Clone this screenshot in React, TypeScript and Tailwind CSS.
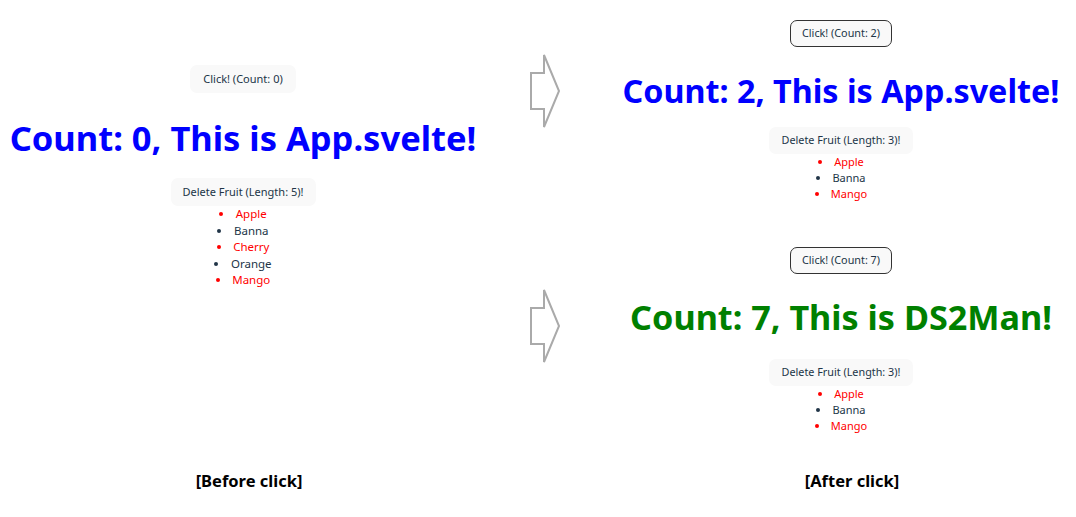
const fruitsAll = ['Apple', 'Banna', 'Cherry', 'Orange', 'Mango']
const fruitsLeft = ['Apple', 'Banna', 'Mango']

function Arrow() {
  return (
    <svg width="32" height="76" viewBox="0 0 32 76" className="block">
      <path
        d="M1 20 H14 V2 L29 38 L14 74 V56 H1 Z"
        fill="none"
        stroke="#aaaaaa"
        strokeWidth="2"
        strokeLinejoin="miter"
      />
    </svg>
  )
}

function FruitList({ items, size }: { items: string[]; size: 'lg' | 'sm' }) {
  return (
    <ul
      className={
        size === 'lg'
          ? 'list-disc list-inside text-center text-[11.5px] leading-[16.5px]'
          : 'list-disc list-inside text-center text-[11px] leading-[15.9px]'
      }
    >
      {items.map((f, i) => (
        <li key={f} className={i % 2 === 0 ? 'text-[#ff0000]' : 'text-[#213547] marker:text-[#213547]'}>
          {f}
        </li>
      ))}
    </ul>
  )
}

function Panel({
  count,
  name,
  color,
  items,
  size,
  headingClass,
  outlined,
}: {
  count: number
  name: string
  color: string
  items: string[]
  size: 'lg' | 'sm'
  headingClass: string
  outlined?: boolean
}) {
  const lg = size === 'lg'
  return (
    <div className="flex flex-col items-center">
      <button
        className={
          (lg ? 'h-[28px] px-[12px] text-[11px] ' : 'h-[27px] px-[11px] text-[10.8px] ') +
          'rounded-[7px] bg-[#f9f9f9] text-[#213547] ' +
          (outlined ? 'border-[1.5px] border-[#333333]' : 'border-[1.5px] border-transparent')
        }
      >
        Click! (Count: {count})
      </button>
      <h1 className={headingClass + ' font-bold whitespace-nowrap ' + color}>
        Count: {count}, This is {name}!
      </h1>
      <button
        className={
          (lg ? 'h-[28px] px-[12px] text-[11px] ' : 'h-[27px] px-[13px] text-[10.8px] ') +
          'rounded-[7px] bg-[#f9f9f9] text-[#213547]'
        }
      >
        Delete Fruit (Length: {items.length})!
      </button>
      <FruitList items={items} size={size} />
    </div>
  )
}

export default function App() {
  return (
    <div
      className="w-[1076px] h-[517px] bg-white flex flex-col overflow-hidden"
      style={{ fontFamily: '"Noto Sans", "Open Sans", sans-serif' }}
    >
      <div className="flex h-[471px] shrink-0">
        <div className="w-[486px] shrink-0 pt-[65px]">
          <Panel
            count={0}
            name="App.svelte"
            color="text-[#0000ff]"
            items={fruitsAll}
            size="lg"
            headingClass="text-[34.5px] leading-[42px] mt-[24px] mb-[19px]"
          />
        </div>
        <div className="w-[120px] shrink-0 flex flex-col pl-[44px] pt-[53px]">
          <Arrow />
          <div className="h-[159px]" />
          <Arrow />
        </div>
        <div className="w-[470px] shrink-0 flex flex-col">
          <div className="pt-[20px]">
            <Panel
              count={2}
              name="App.svelte"
              color="text-[#0000ff]"
              items={fruitsLeft}
              size="sm"
              headingClass="text-[32.3px] leading-[40px] mt-[23px] mb-[17px]"
              outlined
            />
          </div>
          <div className="pt-[45px]">
            <Panel
              count={7}
              name="DS2Man"
              color="text-[#008000]"
              items={fruitsLeft}
              size="sm"
              headingClass="text-[34.2px] leading-[42px] mt-[22px] mb-[21px]"
              outlined
            />
          </div>
        </div>
      </div>
      <div className="flex text-[16.5px] leading-[20px] font-bold text-black">
        <div className="w-[498px] shrink-0 text-center">[Before click]</div>
        <div className="w-[708px] shrink-0 text-center">[After click]</div>
      </div>
    </div>
  )
}
